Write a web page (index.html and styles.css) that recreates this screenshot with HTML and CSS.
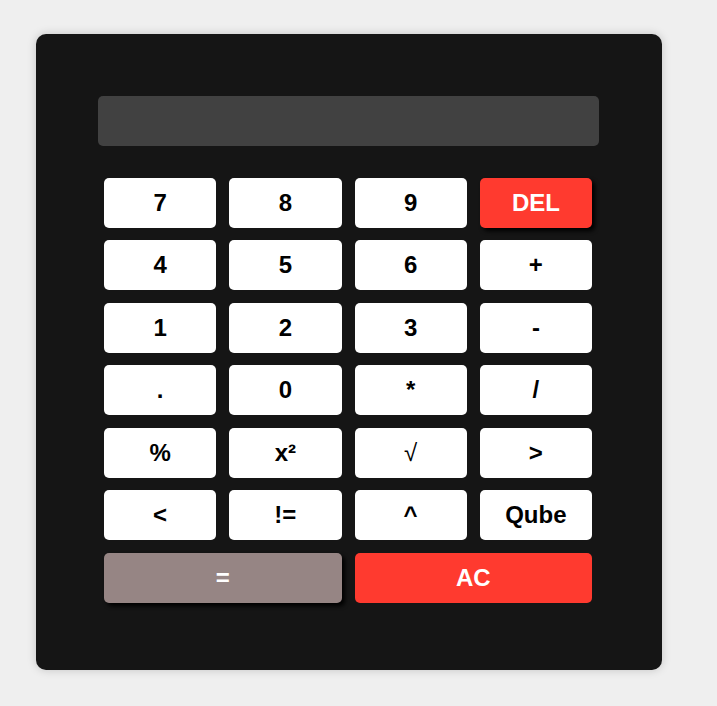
FILE: index.html
```html
<!DOCTYPE html>
<html lang="en">
<head>
<meta charset="utf-8">
<title>Calculator</title>
<link rel="stylesheet" href="styles.css">
</head>
<body>
<div class="calculator">
  <div class="display"></div>
  <div class="keys">
    <button class="key">7</button>
    <button class="key">8</button>
    <button class="key">9</button>
    <button class="key key-red key-shadow">DEL</button>
    <button class="key">4</button>
    <button class="key">5</button>
    <button class="key">6</button>
    <button class="key">+</button>
    <button class="key">1</button>
    <button class="key">2</button>
    <button class="key">3</button>
    <button class="key">-</button>
    <button class="key">.</button>
    <button class="key">0</button>
    <button class="key">*</button>
    <button class="key">/</button>
    <button class="key">%</button>
    <button class="key">x²</button>
    <button class="key key-sqrt">√</button>
    <button class="key">&gt;</button>
    <button class="key">&lt;</button>
    <button class="key">!=</button>
    <button class="key">^</button>
    <button class="key">Qube</button>
    <button class="key key-wide key-equal key-shadow">=</button>
    <button class="key key-wide key-red">AC</button>
  </div>
</div>
</body>
</html>
```
FILE: styles.css
```css
html, body {
  margin: 0;
  padding: 0;
}
body {
  background: #efefef;
  font-family: "Liberation Sans", Arial, sans-serif;
  padding: 34px 36px;
  min-height: 706px;
  box-sizing: border-box;
}
.calculator {
  width: 626px;
  box-sizing: border-box;
  background: #151515;
  border-radius: 10px;
  padding: 62px 63px 67px 62px;
  box-shadow: 0 0 10px rgba(0, 0, 0, 0.18);
}
.display {
  height: 50px;
  background: #414141;
  border-radius: 5px;
}
.keys {
  margin-top: 31.8px;
  padding: 0 7px 0 6px;
  display: grid;
  grid-template-columns: repeat(4, 1fr);
  grid-auto-rows: 50px;
  gap: 12.5px 13px;
}
.key {
  border: none;
  margin: 0;
  padding: 0;
  background: #ffffff;
  color: #000000;
  border-radius: 5px;
  font-family: "Liberation Sans", Arial, sans-serif;
  font-weight: bold;
  font-size: 24px;
  line-height: 1;
  display: flex;
  align-items: center;
  justify-content: center;
}
.key-sqrt {
  font-weight: normal;
}
.key-red {
  background: #ff3a2f;
  color: #ffffff;
}
.key-equal {
  background: #968584;
  color: #ffffff;
}
.key-shadow {
  box-shadow: 3px 3px 4px #000000;
}
.key-wide {
  grid-column: span 2;
}
```
